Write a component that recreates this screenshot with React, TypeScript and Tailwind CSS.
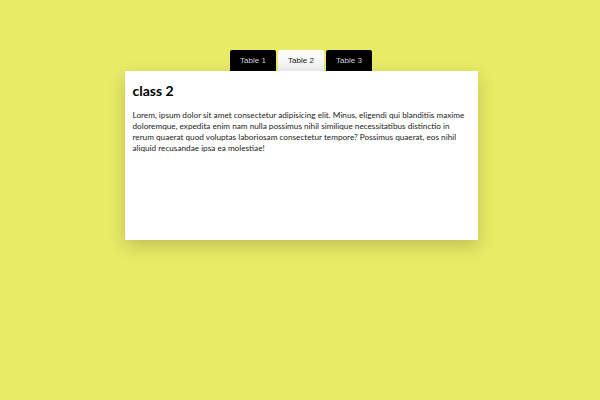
import React from "react";

export default function App() {
  const tabs = ["Table 1", "Table 2", "Table 3"];
  return (
    <div className="w-[600px] h-[400px] bg-[#e8eb66] flex flex-col items-center pt-[50px]">
      <div className="flex gap-[2px] ml-[2px]">
        {tabs.map((t, i) => (
          <div
            key={t}
            className={
              "h-[21px] w-[46px] flex items-center justify-center rounded-t-[2px] text-[8px] font-['Liberation_Sans',Arial,sans-serif] " +
              (i === 1
                ? "bg-gradient-to-b from-white to-[#f0f0f0] text-[#222]"
                : "bg-black text-[#d0d0d0]")
            }
          >
            {t}
          </div>
        ))}
      </div>
      <div className="w-[353px] h-[169px] ml-[2px] bg-white shadow-[0_6px_16px_rgba(0,0,0,0.18)] px-[8px] pt-[11px] font-['Lato','Noto_Sans',sans-serif] text-black">
        <h2 className="text-[14px] font-bold leading-[18px]">class 2</h2>
        <p className="mt-[10px] text-[8.2px] leading-[11px] text-[#222]">
          Lorem, ipsum dolor sit amet consectetur adipisicing elit. Minus, eligendi qui blanditiis maxime doloremque, expedita enim nam nulla possimus nihil similique necessitatibus distinctio in rerum quaerat quod voluptas laboriosam consectetur tempore? Possimus quaerat, eos nihil aliquid recusandae ipsa ea molestiae!
        </p>
      </div>
    </div>
  );
}
